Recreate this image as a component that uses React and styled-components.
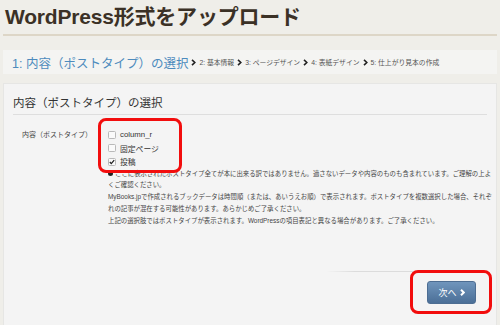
import React from "react";
import styled, { createGlobalStyle } from "styled-components";

const GlobalStyle = createGlobalStyle`
  html, body {
    margin: 0;
    padding: 0;
    background: #efeee9;
    font-family: "Liberation Sans", "Noto Sans CJK JP", sans-serif;
    overflow: hidden;
  }
`;

const Page = styled.div`
  width: 494px;
  height: 325px;
  padding: 0 3px;
  display: flex;
  flex-direction: column;
`;

const Title = styled.h1`
  margin: 0;
  padding: 4px 2px 5px;
  font-size: 21px;
  line-height: 25px;
  font-weight: bold;
  color: #3b3126;
  letter-spacing: -0.2px;
  border-bottom: 2px solid #ddd6c7;
`;

const StepBar = styled.div`
  margin-top: 14px;
  height: 24px;
  background: #f4f4f2;
  padding-left: 9px;
  display: flex;
  align-items: center;
  gap: 3px;
  white-space: nowrap;
`;

const Step = styled.span`
  font-size: ${(p) => (p.$active ? "12.5px" : "6.8px")};
  color: ${(p) => (p.$active ? "#4d8bbd" : "#555")};
`;

const Chevron = ({ size = 5, color = "#222", width = 1.6 }) => (
  <svg width={size} height={size * 1.4} viewBox="0 0 5 7">
    <polyline
      points="1,0.8 3.8,3.5 1,6.2"
      fill="none"
      stroke={color}
      strokeWidth={width}
    />
  </svg>
);

const Card = styled.div`
  margin-top: 9px;
  flex: 1;
  background: #f4f4f4;
  border: 1px solid #e6e6e4;
  border-bottom: none;
  padding: 0 4px 0 9px;
  display: flex;
  flex-direction: column;
`;

const CardTitle = styled.h2`
  margin: 0 5px 0 0;
  padding: 12px 0 4px;
  font-size: 11.5px;
  line-height: 14px;
  font-weight: normal;
  color: #333;
  border-bottom: 1px solid #dedede;
`;

const FormRow = styled.div`
  display: grid;
  grid-template-columns: 86px 1fr;
  padding: 13px 0 0 9px;
`;

const FieldLabel = styled.div`
  font-size: 7px;
  line-height: 13.5px;
  color: #444;
`;

const Choices = styled.div`
  position: relative;
  display: flex;
  flex-direction: column;
  align-self: start;
`;

const Choice = styled.label`
  display: flex;
  align-items: center;
  gap: 4px;
  height: 13.5px;
  font-size: 7.8px;
  color: #333;
`;

const Box = styled.span`
  width: 6px;
  height: 6px;
  border: 1px solid #b9b9b9;
  border-radius: 1.5px;
  background: #fafafa;
  display: flex;
  align-items: center;
  justify-content: center;
`;

const Highlight = styled.div`
  position: absolute;
  border: 3px solid #f20d0d;
  border-radius: 8px;
  pointer-events: none;
`;

const Notes = styled.div`
  grid-column: 2;
  margin-top: -1px;
  font-size: 6.4px;
  line-height: 11.8px;
  color: #444;
  white-space: nowrap;
`;

const Info = styled.span`
  display: inline-block;
  width: 5px;
  height: 5px;
  margin-right: 2px;
  border-radius: 50%;
  background: #222;
  vertical-align: -0.5px;
`;

const Footer = styled.div`
  margin: auto 5px 0 0;
  height: 53px;
  border-top: 1px solid transparent;
  border-image: linear-gradient(to right, rgba(222, 222, 222, 0) 66%, #dcdcdc 72%) 1;
  display: flex;
  justify-content: flex-end;
  align-items: flex-start;
`;

const ButtonWrap = styled.div`
  position: relative;
  margin: 9px 11px 0 0;
`;

const NextButton = styled.button`
  width: 49px;
  height: 23px;
  border: 1px solid #4d6d92;
  border-radius: 3px;
  background: linear-gradient(#7095bc, #4b6f97);
  color: #fff;
  font-family: inherit;
  font-size: 9px;
  display: flex;
  align-items: center;
  justify-content: center;
  gap: 3px;
  padding: 0;
`;

const Check = () => (
  <svg width="6" height="6" viewBox="0 0 6 6">
    <polyline points="0.8,3 2.3,4.6 5.2,1.2" fill="none" stroke="#222" strokeWidth="1.3" />
  </svg>
);

const choices = [
  { label: "column_r", checked: false },
  { label: "固定ページ", checked: false },
  { label: "投稿", checked: true },
];

const steps = ["2: 基本情報", "3: ページデザイン", "4: 表紙デザイン", "5: 仕上がり見本の作成"];

export default function App() {
  return (
    <Page>
      <GlobalStyle />
      <Title>WordPress形式をアップロード</Title>

      <StepBar>
        <Step $active>1: 内容（ポストタイプ）の選択</Step>
        {steps.map((s) => (
          <React.Fragment key={s}>
            <Chevron />
            <Step>{s}</Step>
          </React.Fragment>
        ))}
      </StepBar>

      <Card>
        <CardTitle>内容（ポストタイプ）の選択</CardTitle>
        <FormRow>
          <FieldLabel>内容（ポストタイプ）</FieldLabel>
          <Choices>
            {choices.map((c) => (
              <Choice key={c.label}>
                <Box>{c.checked && <Check />}</Box>
                {c.label}
              </Choice>
            ))}
            <Highlight style={{ left: -10, top: -10, width: 78, height: 49 }} />
          </Choices>
          <Notes>
            <div>
              <Info />
              ここに表示されたポストタイプ全てが本に出来る訳ではありません。適さないデータや内容のものも含まれています。ご理解の上よ
            </div>
            <div>くご確認ください。</div>
            <div>
              MyBooks.jpで作成されるブックデータは時間順（または、あいうえお順）で表示されます。ポストタイプを複数選択した場合、それぞ
            </div>
            <div>れの記事が混在する可能性があります。あらかじめご了承ください。</div>
            <div>
              上記の選択肢ではポストタイプが表示されます。WordPressの項目表記と異なる場合があります。ご了承ください。
            </div>
          </Notes>
        </FormRow>

        <Footer>
          <ButtonWrap>
            <NextButton>
              次へ
              <Chevron size={5} color="#fff" width={2} />
            </NextButton>
            <Highlight style={{ left: -17, top: -11, right: -16, bottom: -10 }} />
          </ButtonWrap>
        </Footer>
      </Card>
    </Page>
  );
}
